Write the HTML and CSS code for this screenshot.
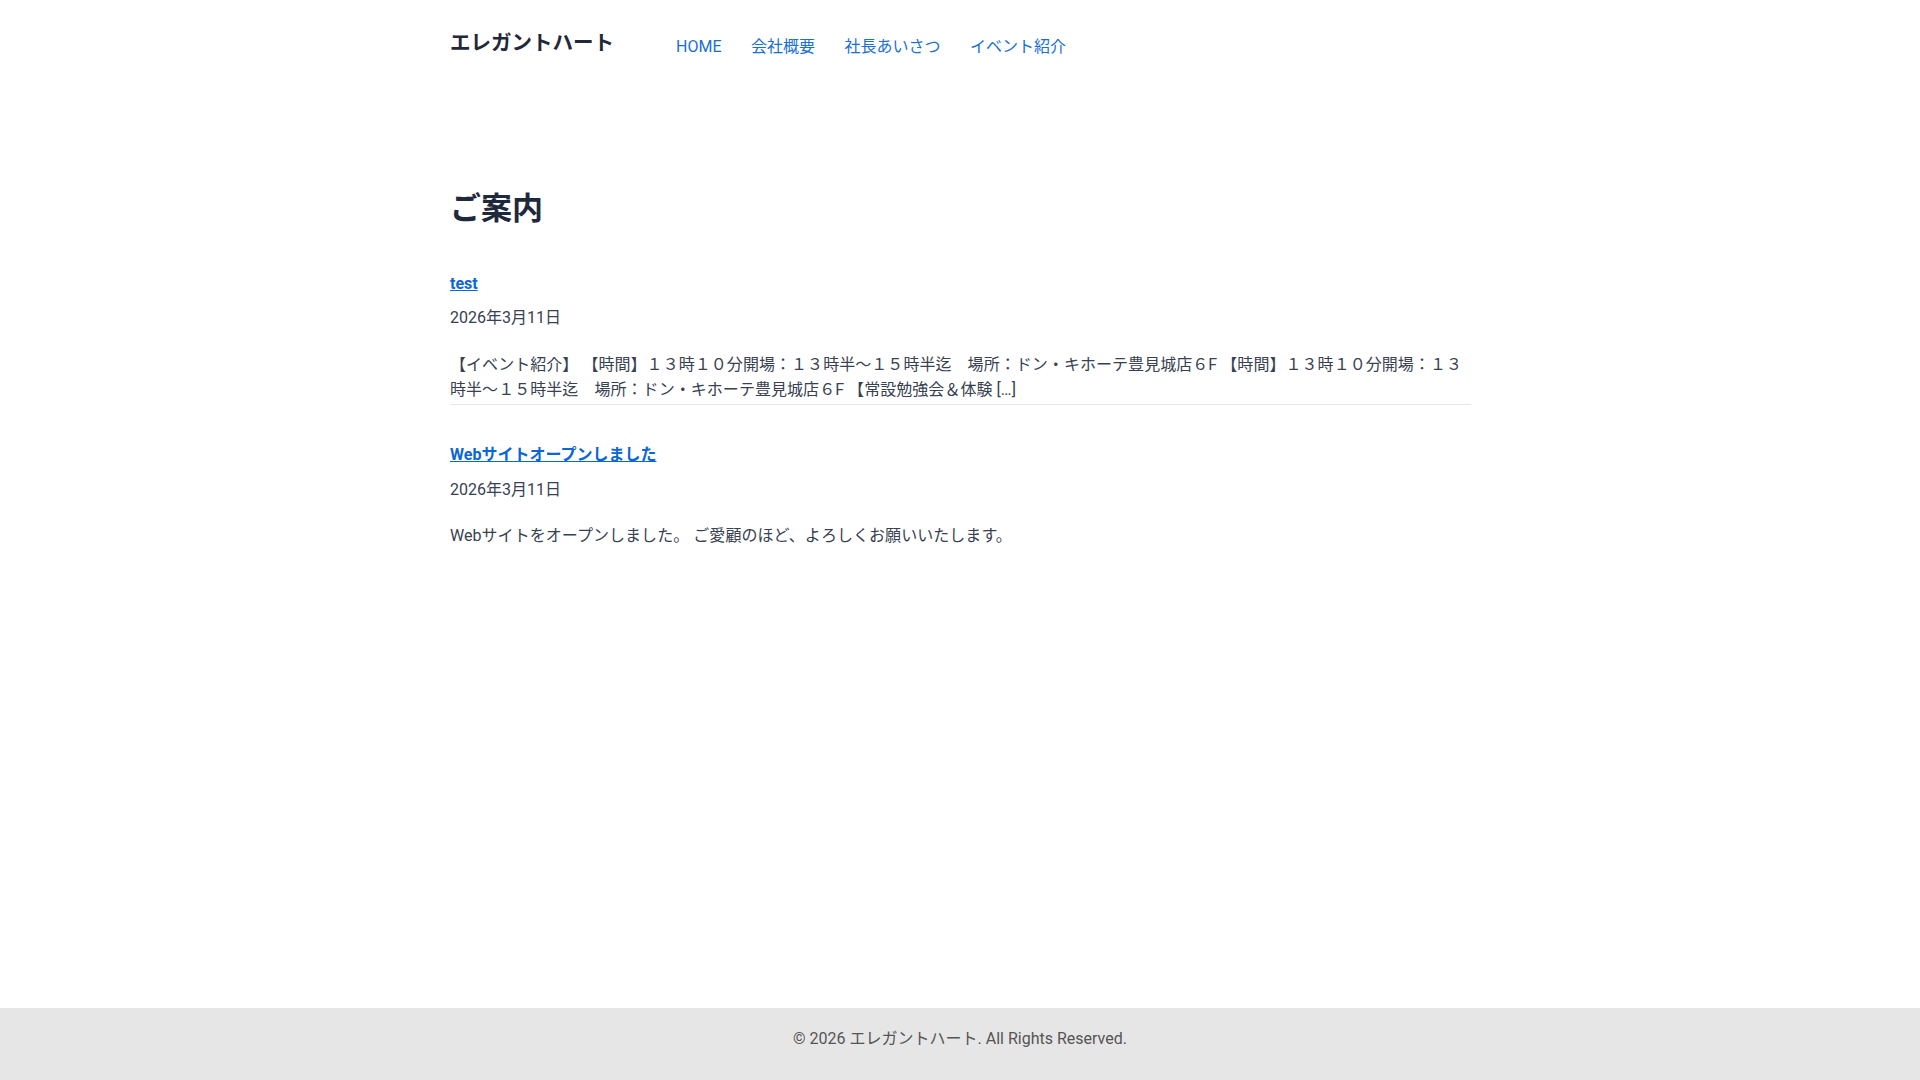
FILE: index.html
```html
<!DOCTYPE html>
<html lang="ja">
<head>
<meta charset="utf-8">
<title>ご案内 | エレガントハート</title>
<link rel="stylesheet" href="styles.css">
</head>
<body>
<div class="page">
  <header class="site-header">
    <div class="container header-inner">
      <a class="logo" href="#">エレガントハート</a>
      <nav class="nav">
        <a href="#">HOME</a>
        <a href="#">会社概要</a>
        <a href="#">社長あいさつ</a>
        <a href="#">イベント紹介</a>
      </nav>
    </div>
  </header>
  <main class="container main">
    <h1 class="page-title">ご案内</h1>
    <article class="post">
      <h2 class="post-title"><a href="#">test</a></h2>
      <div class="post-date">2026年3月11日</div>
      <p class="post-excerpt">【イベント紹介】 【時間】１３時１０分開場：１３時半～１５時半迄　場所：ドン・キホーテ豊見城店６F 【時間】１３時１０分開場：１３時半～１５時半迄　場所：ドン・キホーテ豊見城店６F 【常設勉強会＆体験 [&hellip;]</p>
    </article>
    <article class="post">
      <h2 class="post-title"><a href="#">Webサイトオープンしました</a></h2>
      <div class="post-date">2026年3月11日</div>
      <p class="post-excerpt">Webサイトをオープンしました。 ご愛顧のほど、よろしくお願いいたします。</p>
    </article>
  </main>
  <footer class="site-footer">
    <p>&copy; 2026 エレガントハート. All Rights Reserved.</p>
  </footer>
</div>
</body>
</html>
```

FILE: styles.css
```css
html, body {
  margin: 0;
  padding: 0;
}
body {
  font-family: Roboto, "Noto Sans CJK JP", sans-serif;
  font-size: 16px;
  line-height: 1.6;
  color: #374151;
  background: #ffffff;
}
.page {
  min-height: 100vh;
  display: flex;
  flex-direction: column;
}
.container {
  max-width: 1024px;
  width: 100%;
  margin: 0 auto;
  box-sizing: border-box;
  padding: 0 1px 0 2px;
}
.site-header {
  padding: 31px 0 0;
}
.header-inner {
  display: flex;
  align-items: flex-start;
}
.logo {
  font-size: 20.5px;
  font-weight: 700;
  color: #1f2937;
  text-decoration: none;
  line-height: 24px;
}
.nav {
  display: flex;
  gap: 29.5px;
  margin-left: 62px;
  margin-top: 3px;
}
.nav a {
  color: #1a6fd4;
  text-decoration: none;
  font-size: 16px;
}
.main {
  flex: 1;
  padding-top: 131px;
}
.page-title {
  margin: 0 0 44px;
  font-size: 31px;
  line-height: 36px;
  font-weight: 700;
  color: #1e293b;
}
.post {
  border-bottom: 1px solid #e5e7eb;
  margin-bottom: 37px;
}
.post:last-child {
  border-bottom: none;
}
.post-title {
  margin: 0;
  font-size: 16px;
  line-height: 1.6;
  font-weight: 700;
}
.post-title a {
  color: #0b66d6;
  text-decoration: underline;
}
.post-date {
  margin-top: 9px;
  color: #374151;
}
.post-excerpt {
  margin: 21px 0 0;
  padding-bottom: 1px;
  color: #374151;
  letter-spacing: 0.05px;
}
.site-footer {
  background: #e6e6e6;
  height: 72px;
  box-sizing: border-box;
  padding-top: 18px;
  text-align: center;
  color: #555555;
}
.site-footer p {
  margin: 0;
}
```
